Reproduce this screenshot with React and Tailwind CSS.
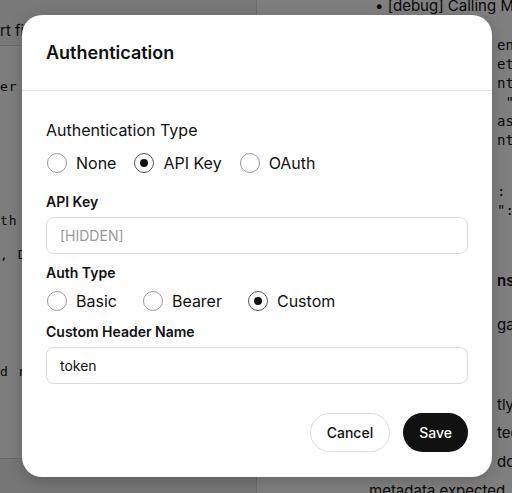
import React from "react";

const sans = { fontFamily: "Inter, 'Liberation Sans', sans-serif" };

function Radio({ checked, label }) {
  return (
    <label className="flex items-center gap-[9px] text-[16px] text-[#111] leading-5">
      <span
        className={
          "flex h-5 w-5 items-center justify-center rounded-full border bg-white " +
          (checked ? "border-[#555]" : "border-[#9a9a9a]")
        }
      >
        {checked && <span className="h-2 w-2 rounded-full bg-[#111]" />}
      </span>
      <span>{label}</span>
    </label>
  );
}

export default function App() {
  const mono = "font-['DejaVu_Sans_Mono',monospace] text-[13px] text-[#111] whitespace-nowrap";
  const rmono = "font-['DejaVu_Sans_Mono',monospace] text-[14px] text-[#111] whitespace-nowrap";
  return (
    <div className="relative flex h-[493px] w-[512px] overflow-hidden bg-white" style={sans}>
      {/* left panel */}
      <div className="flex w-[257px] flex-col border-r border-[#d8d8d8] bg-white">
        <div className="flex h-[46px] items-center border-b border-[#d6d6d6] bg-[#f2f2f2]">
          <span className="pt-[18px] text-[15px] text-[#111] whitespace-nowrap">rt file</span>
        </div>
        <div className="flex flex-1 flex-col bg-[#fbfbfb]">
          <div className={mono + " mt-[32px] leading-[18px] tracking-[1px]"}>er</div>
          <div className={mono + " mt-[116px] leading-[18px] tracking-[1px]"}>th</div>
          <div className={mono + " mt-[16px] leading-[18px] tracking-[1px]"}>, D</div>
          <div className={mono + " mt-[99px] leading-[18px] tracking-[1px]"}>d r</div>
        </div>
        <div className="h-[35px] border-t border-[#d0d0d0] bg-[#ededed]" />
      </div>
      {/* right panel */}
      <div className="flex flex-1 flex-col overflow-hidden bg-white">
        <div className="mt-[-5px] pl-[118px] text-[15px] text-[#111] whitespace-nowrap">• [debug] Calling MCP tool</div>
        <div className={rmono + " pl-[115px] leading-[16px]"}>{"{"}</div>
        <div className={rmono + " pl-[240px] leading-[19px] mt-[2px]"}>enabled</div>
        <div className={rmono + " pl-[240px] leading-[19px]"}>et"</div>
        <div className={rmono + " pl-[240px] leading-[19px]"}>ntent</div>
        <div className={rmono + " pl-[240px] leading-[19px]"}>&nbsp;"c</div>
        <div className={rmono + " pl-[240px] leading-[19px]"}>ash</div>
        <div className={rmono + " pl-[240px] leading-[19px]"}>nt.</div>
        <div className={rmono + " pl-[240px] leading-[19px] mt-[32px]"}>: "</div>
        <div className={rmono + " pl-[240px] leading-[19px]"}>":</div>
        <div className="mt-[51px] pl-[240px] text-[15px] font-semibold text-[#111] whitespace-nowrap leading-5">nse</div>
        <div className="mt-[24px] pl-[240px] text-[15px] text-[#111] whitespace-nowrap leading-5">gar</div>
        <div className="mt-[56px] pl-[240px] text-[15px] text-[#111] whitespace-nowrap leading-[28px]">tly</div>
        <div className="pl-[240px] text-[15px] text-[#111] whitespace-nowrap leading-[28px]">ted</div>
        <div className="pl-[240px] text-[15px] text-[#111] whitespace-nowrap leading-[30px]">doe</div>
        <div className="pl-[112px] text-[15px] text-[#111] whitespace-nowrap leading-[28px]">metadata expected</div>
      </div>

      {/* overlay */}
      <div className="absolute inset-0 flex items-center justify-center bg-black/50">
        <div className="flex h-[462px] w-[470px] flex-col rounded-[20px] bg-white shadow-[0_4px_16px_rgba(0,0,0,0.2)] mt-[-2px] ml-[2px]">
          <div className="flex h-[76px] shrink-0 items-center border-b border-[#e4e4e4] px-6">
            <h2 className="text-[18px] font-semibold text-[#111]">Authentication</h2>
          </div>
          <div className="flex flex-1 flex-col px-6 pt-[27px] pb-[25px]">
            <div className="text-[16px] leading-6 text-[#111]">Authentication Type</div>
            <div className="mt-[11px] flex items-center gap-[18px] pl-px">
              <Radio label="None" />
              <Radio checked label="API Key" />
              <Radio label="OAuth" />
            </div>
            <div className="mt-[19px] text-[14px] font-semibold leading-5 text-[#111]">API Key</div>
            <div className="mt-[5px] flex h-[37px] items-center rounded-[8px] border border-[#dcdcdc] px-[13px] text-[14px] text-[#9a9a9a]">
              [HIDDEN]
            </div>
            <div className="mt-[9px] text-[14px] font-semibold leading-5 text-[#111]">Auth Type</div>
            <div className="mt-[8px] flex items-center gap-[26px] pl-px">
              <Radio label="Basic" />
              <Radio label="Bearer" />
              <Radio checked label="Custom" />
            </div>
            <div className="mt-[11px] text-[14px] font-semibold leading-5 text-[#111]">Custom Header Name</div>
            <div className="mt-[5px] flex h-[37px] items-center rounded-[8px] border border-[#dcdcdc] px-[13px] text-[14px] text-[#111]">
              token
            </div>
            <div className="mt-auto flex justify-end gap-[13px]">
              <button className="h-[39px] rounded-full border border-[#dcdcdc] bg-white px-4 text-[14px] font-medium text-[#111]">
                Cancel
              </button>
              <button className="h-[39px] rounded-full bg-[#111] px-4 text-[14px] font-medium text-white">
                Save
              </button>
            </div>
          </div>
        </div>
      </div>
    </div>
  );
}
